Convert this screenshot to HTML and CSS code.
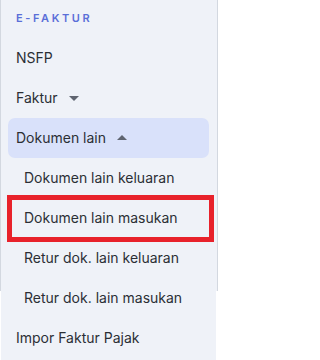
FILE: index.html
```html
<!DOCTYPE html>
<html lang="id">
<head>
<meta charset="utf-8">
<title>E-Faktur menu</title>
<link rel="stylesheet" href="styles.css">
</head>
<body>
<aside class="sidebar">
  <div class="section-title">E-FAKTUR</div>
  <ul class="menu">
    <li class="item">NSFP</li>
    <li class="item">Faktur <svg class="caret" viewBox="0 0 24 24" width="24" height="24"><path d="M7 10l5 5 5-5z"/></svg></li>
    <li class="item active">Dokumen lain <svg class="caret" viewBox="0 0 24 24" width="24" height="24"><path d="M7 14l5-5 5 5z"/></svg></li>
    <li class="item sub">Dokumen lain keluaran</li>
    <li class="item sub marked">Dokumen lain masukan</li>
    <li class="item sub">Retur dok. lain keluaran</li>
    <li class="item sub">Retur dok. lain masukan</li>
    <li class="item">Impor Faktur Pajak</li>
  </ul>
</aside>
</body>
</html>
```
FILE: styles.css
```css
html, body {
  margin: 0;
  padding: 0;
  background: #ffffff;
}

.sidebar {
  width: 218px;
  height: 360px;
  box-sizing: border-box;
  font-family: Inter, "Noto Sans", sans-serif;
  color: #2b2f35;
  background:
    linear-gradient(#d3d8e0, #d3d8e0) 0 0 / 1px 291px no-repeat,
    linear-gradient(#d3d8e0, #d3d8e0) 217px 0 / 1px 291px no-repeat,
    linear-gradient(#eff2f8, #eff2f8) 1px 0 / 216px 291px no-repeat,
    linear-gradient(#eff2f8, #eff2f8) 1px 291px / 215px 69px no-repeat;
}

.section-title {
  padding: 12px 16px 14px;
  line-height: 12px;
  font-size: 11px;
  font-weight: 600;
  letter-spacing: 2.6px;
  color: #5a6fd8;
}

.menu {
  list-style: none;
  margin: 0;
  padding: 0 9px 0 8px;
}

.item {
  display: flex;
  align-items: center;
  height: 40px;
  padding-left: 8px;
  font-size: 14px;
  line-height: 40px;
  white-space: nowrap;
}

.item.active {
  background: #d9e1fa;
  border-radius: 7px;
}

.item.sub {
  padding-left: 16px;
}

.caret {
  width: 24px;
  height: 24px;
  margin-left: 4px;
  fill: #5f6470;
  flex: none;
}

.marked {
  position: relative;
}

.marked::after {
  content: "";
  position: absolute;
  top: -3px;
  bottom: -4px;
  left: -1px;
  right: -5px;
  border: 5px solid #e8222b;
}
```
